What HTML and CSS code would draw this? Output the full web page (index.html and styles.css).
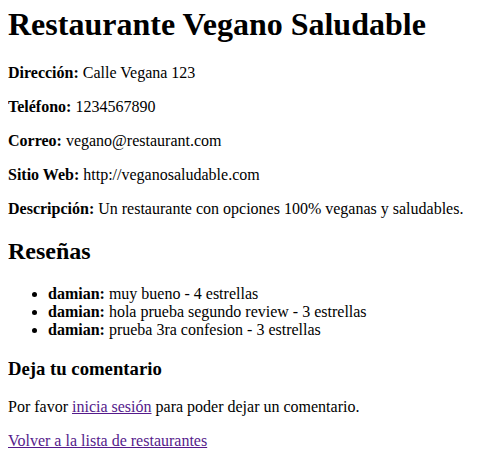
FILE: index.html
```html
<!DOCTYPE html>
<html lang="es">
<head>
<meta charset="utf-8">
<title>Restaurante Vegano Saludable</title>
<link rel="stylesheet" href="styles.css">
</head>
<body class="page">
<h1 class="title">Restaurante Vegano Saludable</h1>
<p class="info"><strong>Dirección:</strong> Calle Vegana 123</p>
<p class="info"><strong>Teléfono:</strong> 1234567890</p>
<p class="info"><strong>Correo:</strong> vegano@restaurant.com</p>
<p class="info"><strong>Sitio Web:</strong> http://veganosaludable.com</p>
<p class="info"><strong>Descripción:</strong> Un restaurante con opciones 100% veganas y saludables.</p>
<h2 class="section">Reseñas</h2>
<ul class="reviews">
<li><strong>damian:</strong> muy bueno - 4 estrellas</li>
<li><strong>damian:</strong> hola prueba segundo review - 3 estrellas</li>
<li><strong>damian:</strong> prueba 3ra confesion - 3 estrellas</li>
</ul>
<h3 class="subsection">Deja tu comentario</h3>
<p class="info">Por favor <a class="link" href="#">inicia sesión</a> para poder dejar un comentario.</p>
<a class="link" href="#">Volver a la lista de restaurantes</a>
</body>
</html>
```
FILE: styles.css
```css
html, body {
  font-family: "Liberation Serif", "Times New Roman", serif;
  font-size: 16px;
  color: #000;
  background: #fff;
}
.page {
  margin: 6px 8px 8px;
}
.title {
  font-size: 32px;
  margin: 0 0 21px;
}
.info {
  margin: 16px 0;
}
.section {
  font-size: 24px;
  margin: 20px 0;
}
.reviews {
  margin: 16px 0;
  padding-left: 40px;
}
.subsection {
  font-size: 18.72px;
  margin: 18.7px 0;
}
.link {
  color: #551a8b;
  text-decoration: underline;
}
```
